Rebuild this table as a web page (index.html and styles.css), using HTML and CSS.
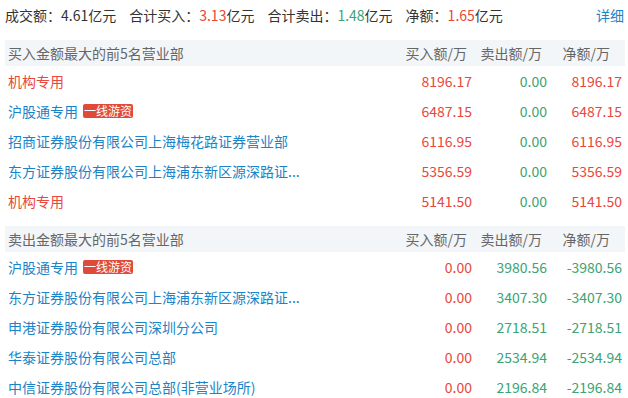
FILE: index.html
```html
<!DOCTYPE html>
<html>
<head>
<meta charset="utf-8">
<link rel="stylesheet" href="styles.css">
</head>
<body>
<div class="page">
  <div class="summary">
    <div class="stats">
      <span class="stat">成交额：4.61亿元</span>
      <span class="stat">合计买入：<em class="red">3.13</em>亿元</span>
      <span class="stat">合计卖出：<em class="green">1.48</em>亿元</span>
      <span class="stat">净额：<em class="red">1.65</em>亿元</span>
    </div>
    <a class="more">详细</a>
  </div>

  <div class="table">
    <div class="row head">
      <div class="name">买入金额最大的前5名营业部</div>
      <div class="num">买入额/万</div>
      <div class="num">卖出额/万</div>
      <div class="num net">净额/万</div>
    </div>
    <div class="row">
      <div class="name red">机构专用</div>
      <div class="num red">8196.17</div>
      <div class="num green">0.00</div>
      <div class="num red">8196.17</div>
    </div>
    <div class="row">
      <div class="name blue">沪股通专用<span class="tag">一线游资</span></div>
      <div class="num red">6487.15</div>
      <div class="num green">0.00</div>
      <div class="num red">6487.15</div>
    </div>
    <div class="row">
      <div class="name blue">招商证券股份有限公司上海梅花路证券营业部</div>
      <div class="num red">6116.95</div>
      <div class="num green">0.00</div>
      <div class="num red">6116.95</div>
    </div>
    <div class="row">
      <div class="name blue">东方证券股份有限公司上海浦东新区源深路证...</div>
      <div class="num red">5356.59</div>
      <div class="num green">0.00</div>
      <div class="num red">5356.59</div>
    </div>
    <div class="row">
      <div class="name red">机构专用</div>
      <div class="num red">5141.50</div>
      <div class="num green">0.00</div>
      <div class="num red">5141.50</div>
    </div>
  </div>

  <div class="table">
    <div class="row head">
      <div class="name">卖出金额最大的前5名营业部</div>
      <div class="num">买入额/万</div>
      <div class="num">卖出额/万</div>
      <div class="num net">净额/万</div>
    </div>
    <div class="row">
      <div class="name blue">沪股通专用<span class="tag">一线游资</span></div>
      <div class="num red">0.00</div>
      <div class="num green">3980.56</div>
      <div class="num green">-3980.56</div>
    </div>
    <div class="row">
      <div class="name blue">东方证券股份有限公司上海浦东新区源深路证...</div>
      <div class="num red">0.00</div>
      <div class="num green">3407.30</div>
      <div class="num green">-3407.30</div>
    </div>
    <div class="row">
      <div class="name blue">申港证券股份有限公司深圳分公司</div>
      <div class="num red">0.00</div>
      <div class="num green">2718.51</div>
      <div class="num green">-2718.51</div>
    </div>
    <div class="row">
      <div class="name blue">华泰证券股份有限公司总部</div>
      <div class="num red">0.00</div>
      <div class="num green">2534.94</div>
      <div class="num green">-2534.94</div>
    </div>
    <div class="row">
      <div class="name blue">中信证券股份有限公司总部(非营业场所)</div>
      <div class="num red">0.00</div>
      <div class="num green">2196.84</div>
      <div class="num green">-2196.84</div>
    </div>
  </div>
</div>
</body>
</html>
```

FILE: styles.css
```css
* { box-sizing: border-box; }
html, body { margin: 0; padding: 0; background: #fff; }
body {
  font-family: "Noto Sans CJK SC", "Microsoft YaHei", sans-serif;
  font-size: 14px;
  color: #333;
}
.page { padding: 0 3px 0 5px; width: 628px; }
em { font-style: normal; }
.red { color: #e8473b; }
.green { color: #3ba374; }
.blue { color: #1a84c7; }

.summary {
  height: 30px;
  display: flex;
  align-items: center;
  justify-content: space-between;
  margin-bottom: 10px;
}
.stats { display: flex; }
.stat { margin-right: 13px; white-space: nowrap; }
.more { color: #1a84c7; margin-right: 1px; }

.table { margin-bottom: 10px; }
.row {
  display: grid;
  grid-template-columns: 392px 75px 75px 75px;
  height: 30px;
  align-items: center;
}
.row.head {
  height: 26px;
  background: #f3f6f9;
  color: #666;
  width: 620px;
}
.name {
  padding-left: 3px;
  white-space: nowrap;
  display: flex;
  align-items: center;
}
.num { text-align: right; white-space: nowrap; }
.head .num { padding-right: 5px; }
.head .num.net { padding-right: 12px; }
.tag {
  display: inline-block;
  margin-left: 5px;
  background: #e04a39;
  color: #fff;
  font-size: 12px;
  line-height: 14px;
  padding: 0 1px;
  border-radius: 2px;
}
```
